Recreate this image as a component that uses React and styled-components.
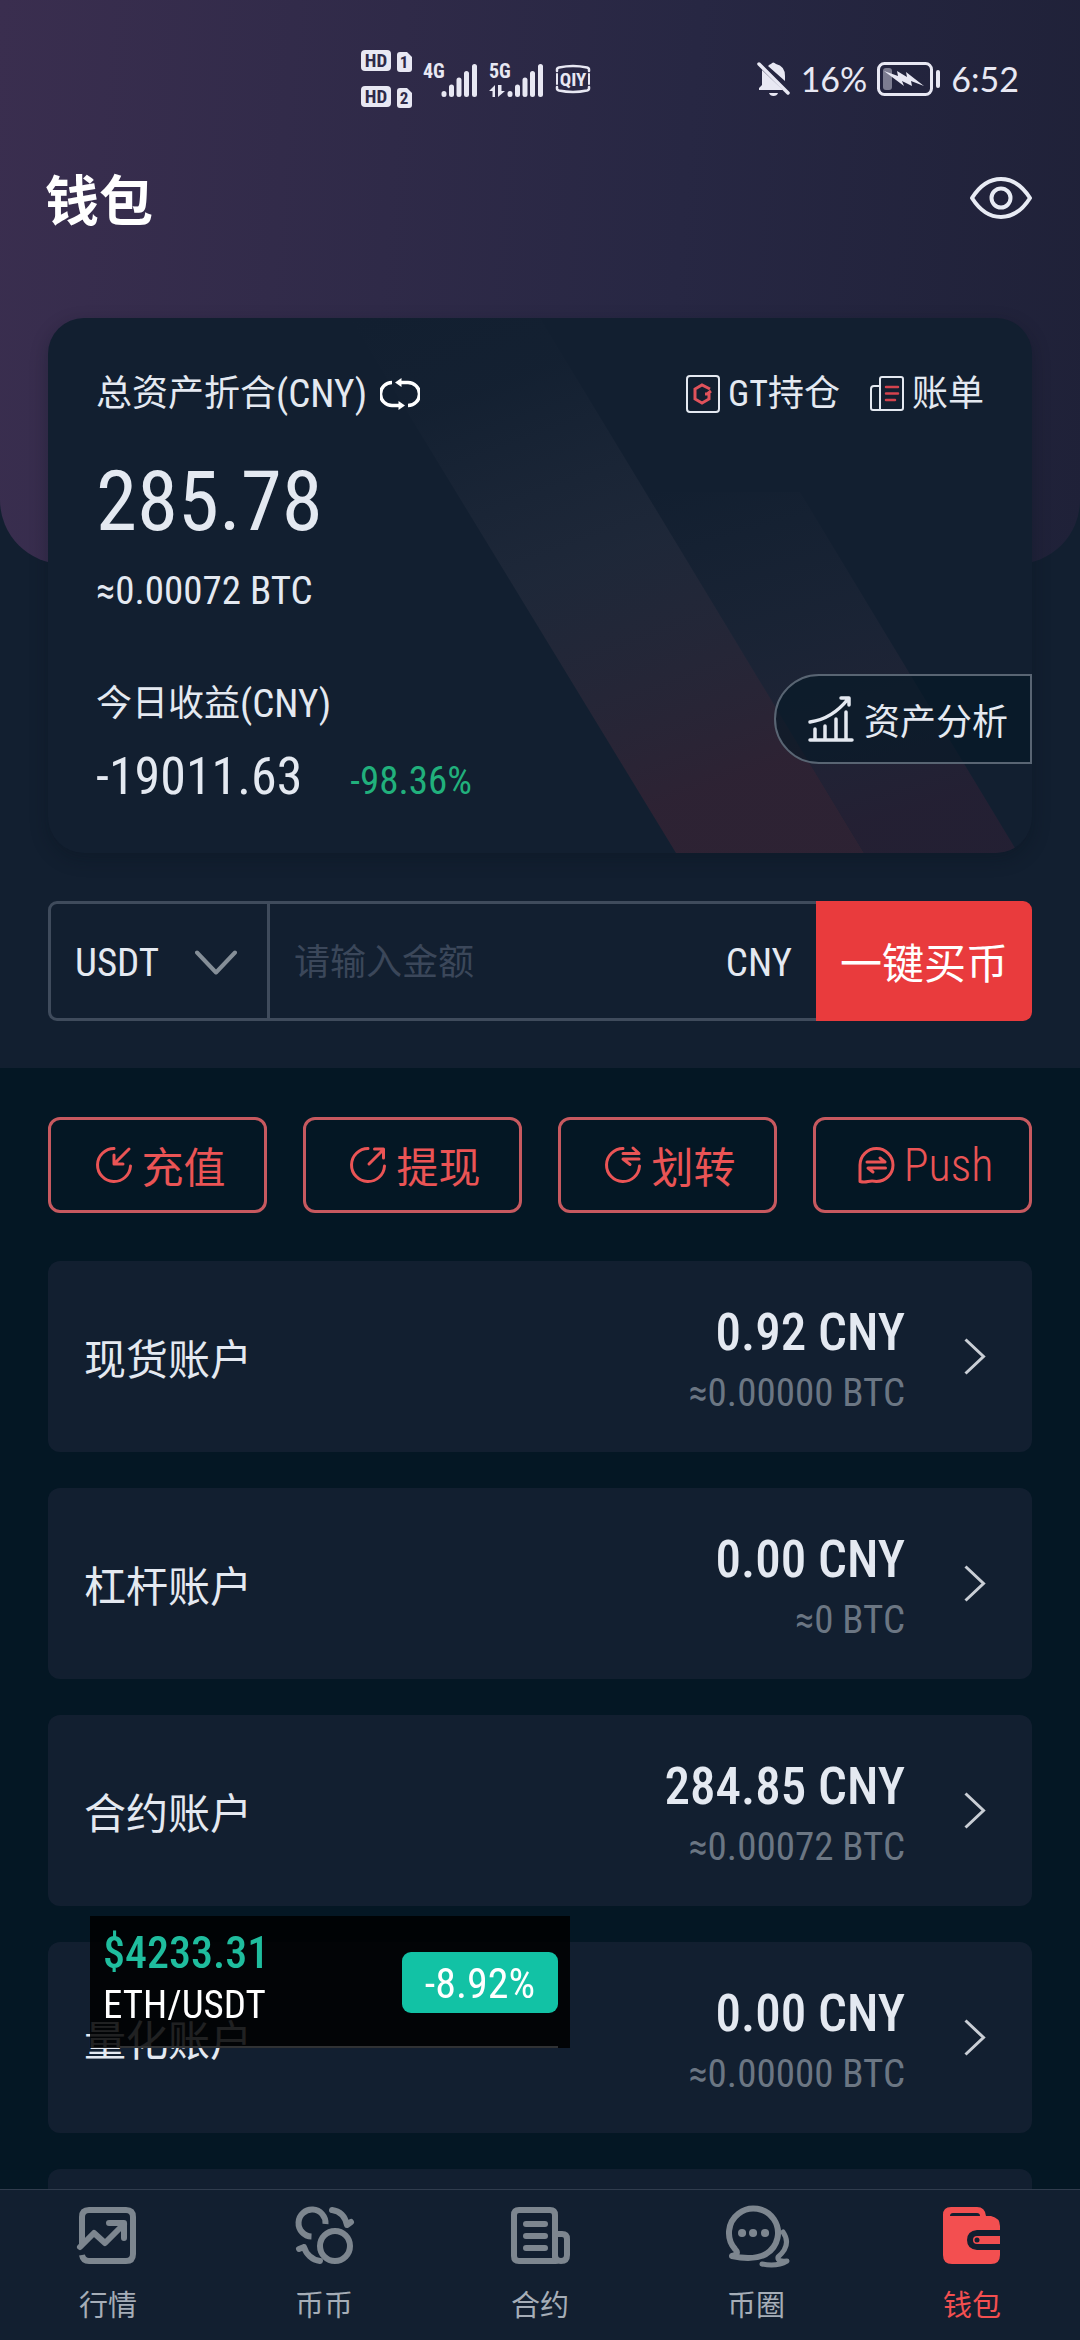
import React from "react";
import styled, { createGlobalStyle, css } from "styled-components";

const c = {
  page: "#041724",
  panel: "#121f30",
  text: "#e4e9f1",
  muted: "#6b7683",
  line: "#3f4b5c",
  red: "#e93b3d",
  coral: "#ea5455",
  coralLine: "#c7595f",
  green: "#21b07c",
  mint: "#12c2a5",
};

const latin = `"Roboto Condensed", Roboto, "Noto Sans CJK SC", sans-serif`;
const han = `"Noto Sans CJK SC", sans-serif`;

const Global = createGlobalStyle`
  *, *::before, *::after { box-sizing: border-box; }
  body {
    margin: 0;
    background: ${c.page};
    color: ${c.text};
    font-family: ${latin};
    font-size: 36px;
    line-height: 48px;
  }
  button, input, select { font: inherit; color: inherit; border: 0; margin: 0; padding: 0; background: none; }
  a { color: inherit; text-decoration: none; }
  svg { display: block; flex: none; }
  h1, h2, p, ul { margin: 0; padding: 0; font-weight: inherit; font-size: inherit; }
`;

const Page = styled.div`
  height: 100vh;
  display: flex;
  flex-direction: column;
`;

const Content = styled.main`
  flex: 1;
  min-height: 0;
  overflow-y: auto;
  scrollbar-width: none;
`;

const Hero = styled.section`
  position: relative;
  isolation: isolate;
  padding-bottom: 47px;
  background: ${c.panel};
  &::before {
    content: "";
    position: absolute;
    z-index: -1;
    inset: 0 0 auto;
    height: 564px;
    border-radius: 0 0 64px 64px;
    background: linear-gradient(95deg, #3a2e4f 0%, #272743 62%, #1f2138 100%);
  }
`;

const StatusBar = styled.header`
  height: 108px;
  padding: 50px 61px 0 361px;
  display: flex;
  align-items: center;
  justify-content: space-between;
  color: #e8e8f3;
`;

const StatusGroup = styled.div`
  display: flex;
  align-items: center;
  gap: ${(p) => p.$gap}px;
`;

const StatusText = styled.span`
  font-family: Lato, "Noto Sans", sans-serif;
  font-size: 34px;
`;

const TitleBar = styled.div`
  height: 180px;
  margin-bottom: 30px;
  padding: 0 48px 0 45px;
  display: flex;
  align-items: center;
  justify-content: space-between;
`;

const Title = styled.h1`
  color: #fff;
  font-family: ${han};
  font-size: 54px;
  line-height: 72px;
  font-weight: 700;
`;

const IconButton = styled.button`
  display: flex;
  align-items: center;
  cursor: pointer;
`;

const Card = styled.section`
  position: relative;
  isolation: isolate;
  margin: 0 48px;
  padding: 52px 48px 46px;
  border-radius: 36px;
  background: ${c.panel};
  box-shadow: 0 6px 18px rgba(5, 15, 28, 0.3);
`;

const Stripes = styled.svg`
  position: absolute;
  z-index: -1;
  inset: 0;
  width: 100%;
  height: 100%;
  border-radius: 36px;
`;

const CardHead = styled.div`
  display: flex;
  justify-content: space-between;
  align-items: center;
`;

const Label = styled.h2`
  display: flex;
  align-items: center;
`;

const Unit = styled.span`
  font-family: ${latin};
  font-size: 39px;
`;

const SwapButton = styled(IconButton)`
  margin-left: 13px;
`;

const CardLinks = styled.nav`
  display: flex;
  gap: 30px;
`;

const CardLink = styled.a`
  display: flex;
  align-items: center;
  gap: 8px;
`;

const Balance = styled.p`
  margin-top: 36px;
  font-size: 83px;
  line-height: 96px;
`;

const BalanceBtc = styled.p`
  margin-top: 17px;
  font-size: 39px;
`;

const CardFoot = styled.div`
  margin-top: 59px;
  margin-right: -48px;
  display: flex;
  align-items: flex-start;
  justify-content: space-between;
`;

const Profit = styled.div`
  padding-top: 6px;
`;

const ProfitRow = styled.p`
  height: 60px;
  margin-top: 19px;
  display: flex;
  align-items: baseline;
  gap: 48px;
  font-size: 52px;
  line-height: 60px;
`;

const Change = styled.span`
  color: ${c.green};
  font-size: 39px;
  line-height: 48px;
`;

const AnalysisButton = styled.button`
  height: 90px;
  padding: 0 22px 0 32px;
  display: flex;
  align-items: center;
  gap: 10px;
  border: 2px solid #596573;
  border-radius: 45px 0 0 45px;
  background: rgba(4, 23, 36, 0.6);
  font-family: ${han};
  cursor: pointer;
`;

const BuyForm = styled.form`
  margin: 48px 48px 0;
  height: 120px;
  display: grid;
  grid-template-columns: 222px 1fr 216px;
`;

const SelectBox = styled.label`
  position: relative;
  display: flex;
  border: 3px solid ${c.line};
  border-radius: 9px 0 0 9px;
  & > svg {
    position: absolute;
    right: 30px;
    top: 46px;
    pointer-events: none;
  }
`;

const CoinSelect = styled.select`
  flex: 1;
  appearance: none;
  padding: 4px 0 0 24px;
  border-radius: 9px;
  font-size: 39px;
`;

const AmountBox = styled.label`
  min-width: 0;
  padding: 4px 24px 0;
  display: flex;
  align-items: center;
  border: solid ${c.line};
  border-width: 3px 0;
`;

const AmountInput = styled.input`
  flex: 1;
  min-width: 0;
  &::placeholder { color: #3b475a; opacity: 1; }
`;

const BuyButton = styled.button`
  border-radius: 0 9px 9px 0;
  background: ${c.red};
  color: #fff;
  font-family: ${han};
  font-size: 42px;
  cursor: pointer;
`;

const Actions = styled.div`
  margin: 49px 48px 48px;
  display: grid;
  grid-template-columns: repeat(4, 1fr);
  gap: 36px;
`;

const ActionButton = styled.button`
  height: 96px;
  display: flex;
  align-items: center;
  justify-content: center;
  gap: 4px;
  border: 3px solid ${c.coralLine};
  border-radius: 12px;
  color: ${c.coral};
  font-family: ${(p) => (p.$latin ? latin : han)};
  font-size: ${(p) => (p.$latin ? 46 : 42)}px;
  font-weight: ${(p) => (p.$latin ? 300 : 400)};
  cursor: pointer;
`;

const Accounts = styled.ul`
  margin: 0 48px 36px;
  display: grid;
  gap: 36px;
  list-style: none;
`;

const Account = styled.a`
  height: 191px;
  padding: 0 46px 0 36px;
  display: flex;
  align-items: center;
  border-radius: 12px;
  background: ${c.panel};
`;

const AccountName = styled.span`
  flex: 1;
  font-family: ${han};
  font-size: 42px;
`;

const Amounts = styled.span`
  margin-right: 59px;
  padding-top: 6px;
  display: grid;
  justify-items: end;
`;

const Cny = styled.span`
  font-size: 51px;
  line-height: 66px;
  font-weight: 500;
`;

const Btc = styled.span`
  color: ${c.muted};
  font-size: 39px;
  line-height: 54px;
`;

const TabBar = styled.nav`
  height: 151px;
  flex: none;
  display: grid;
  grid-template-columns: repeat(5, 1fr);
  border-top: 1px solid #303c4d;
  background: ${c.panel};
`;

const Tab = styled.a`
  padding-top: 10px;
  display: flex;
  flex-direction: column;
  align-items: center;
  gap: 14px;
  color: #7d868f;
  font-size: 29px;
  line-height: 44px;
  span { color: #a5adb7; }
  ${(p) =>
    p.$active &&
    css`
      color: #f34f50;
      span { color: inherit; }
    `}
`;

const Ticker = styled.aside`
  position: fixed;
  left: 90px;
  bottom: 292px;
  width: 480px;
  height: 132px;
  padding: 0 12px 0 13px;
  display: flex;
  align-items: center;
  justify-content: space-between;
  background: rgba(0, 0, 0, 0.86);
  &::after {
    content: "";
    position: absolute;
    left: 30px;
    right: 12px;
    bottom: 0;
    height: 2px;
    background: #303234;
  }
`;

const TickerInfo = styled.div`
  padding-bottom: 10px;
`;

const TickerPrice = styled.p`
  color: #1fbd9e;
  font-size: 44px;
  line-height: 56px;
  font-weight: 500;
`;

const TickerPair = styled.p`
  color: #fff;
  font-size: 39px;
`;

const TickerBadge = styled.span`
  height: 61px;
  width: 156px;
  padding-top: 4px;
  display: flex;
  align-items: center;
  justify-content: center;
  border-radius: 9px;
  background: ${c.mint};
  color: #fff;
  font-size: 42px;
`;

const stroke = { fill: "none", stroke: "currentColor", strokeLinecap: "round", strokeLinejoin: "round" };

const HdIcon = () => (
  <svg width="52" height="60" viewBox="0 0 52 60" fill="currentColor">
    {[0, 36].map((y, i) => (
      <g key={y} transform={`translate(0 ${y})`}>
        <rect y="1" width="30" height="21" rx="4" />
        <path d="M39 3h7l5 5v12a3 3 0 0 1-3 3h-9a3 3 0 0 1-3-3V6a3 3 0 0 1 3-3z" />
        <text x="15" y="18" textAnchor="middle" fontSize="19" fontWeight="700" fill="#2e2a48">HD</text>
        <text x="43" y="19" textAnchor="middle" fontSize="17" fontWeight="700" fill="#2e2a48">{i + 1}</text>
      </g>
    ))}
  </svg>
);

const SignalIcon = ({ label, data }) => (
  <svg width="56" height="44" viewBox="0 -6 56 44" overflow="visible">
    <text x="0" y="15" fontSize="20" fontWeight="700" fill="currentColor">{label}</text>
    <g {...stroke} strokeWidth="5">
      <path d="M21 30.500v1M28.500 24v7.500M36 17v14.500M43.500 10.500v21M51.500 3.500v28" />
    </g>
    {data && <path d="M0 28l6-6v12H3.500v-6zM9 22v12l7-6h-3.500v-6z" fill="currentColor" />}
  </svg>
);

const QiyIcon = () => (
  <svg width="36" height="30" viewBox="0 0 36 30">
    <g {...stroke} strokeWidth="2.500">
      <path d="M2 7V5.500Q2 4 4 3.500Q18 .5 32 3.500Q34 4 34 5.500V7M2 23v1.500Q2 26 4 26.500Q18 29.500 32 26.500Q34 26 34 24.500V23" />
      <path d="M2 10v10M34 10v10" strokeWidth="2" />
    </g>
    <text x="18" y="22" textAnchor="middle" fontSize="19" fontWeight="700" fill="currentColor">QIY</text>
  </svg>
);

const MutedBell = () => (
  <svg width="34" height="36" viewBox="0 0 34 36" fill="currentColor">
    <path d="M5 9L26 29H2V27L5 24z" />
    <path d="M11 5Q13 3 14 3Q16 0 19 3Q28 5 28 15V20z" />
    <path d="M12 32h9q-1 3-4.500 3T12 32z" />
    <path d="M2 3L31 32" stroke="currentColor" strokeWidth="3.500" strokeLinecap="round" />
  </svg>
);

const Battery = () => (
  <svg width="64" height="34" viewBox="0 0 64 34">
    <rect x="1.500" y="1.500" width="53" height="31" rx="6" fill="none" stroke="currentColor" strokeWidth="3" />
    <rect x="6" y="6" width="9" height="22" rx="3" fill="currentColor" opacity=".45" />
    <path d="M7 9l14 5-1-5 10 6-1-5 18 14-13-5 1 5-10-5 2 5z" fill="currentColor" />
    <rect x="59" y="8" width="4" height="18" rx="2" fill="currentColor" />
  </svg>
);

const Eye = () => (
  <svg width="62" height="44" viewBox="0 0 62 44" stroke="#e8ebf4" fill="none" strokeWidth="4" strokeLinejoin="round">
    <path d="M2 22Q14 3 31 3T60 22Q48 41 31 41T2 22z" />
    <circle cx="31" cy="22" r="9.500" />
  </svg>
);

const Swap = () => (
  <svg width="40" height="32" viewBox="0 0 40 32" {...stroke} stroke="#fff" strokeWidth="3.500" strokeLinecap="butt">
    <path d="M12 4.500A11.500 11.500 0 0 0 12 27.500H19M28 27.500A11.500 11.500 0 0 0 28 4.500H21" />
    <path d="M15 4.500L21.500 0V9zM25 27.500L18.500 23V32z" fill="#fff" stroke="none" />
  </svg>
);

const GtIcon = () => (
  <svg width="34" height="38" viewBox="0 0 34 38" fill="none" strokeWidth="2">
    <rect x="1" y="1" width="32" height="36" rx="3" stroke={c.text} />
    <path d="M24 14L16 10L9 14V24L16 28L23 24V19H19M25 16L21 19" stroke="#e0525b" strokeWidth="3" />
  </svg>
);

const BillIcon = () => (
  <svg width="34" height="36" viewBox="0 0 34 36" {...stroke} strokeWidth="2">
    <path d="M10 34V3Q10 1 12 1H31Q33 1 33 3V32Q33 34 31 34H3Q1 34 1 32V13Q1 10 4 10H9" />
    <path d="M16 11H28M16 17.500H28M16 24H25" stroke="#d4434e" strokeWidth="2.500" />
  </svg>
);

const ChartIcon = () => (
  <svg width="46" height="48" viewBox="0 0 46 48" {...stroke} strokeWidth="3.500">
    <path d="M2 45H44M7 45V34M17 45V31M28 45V24M38 45V17" />
    <path d="M2 27Q24 24 40 4M33 3H41V10" />
  </svg>
);

const ChevronDown = () => (
  <svg width="42" height="26" viewBox="0 0 42 26" {...stroke} stroke="#858e97" strokeWidth="4">
    <path d="M2 2.500L21 22.500L40 2.500" />
  </svg>
);

const ChevronRight = () => (
  <svg width="22" height="37" viewBox="0 0 22 37" fill="none" stroke="#c9ced5" strokeWidth="3">
    <path d="M1.500 1.500L19.500 18.500L1.500 35.500" />
  </svg>
);

const actionShapes = {
  deposit: (
    <path d="M25 7.500A16.500 16.500 0 1 0 41.500 25M40 8L25.500 22.500M25 14V23H34" />
  ),
  withdraw: (
    <path d="M24 7.500A16.500 16.500 0 1 0 40.500 25M25 23L39 9M30.500 8H39.500V17" />
  ),
  transfer: (
    <>
      <path d="M24 7.500A16.500 16.500 0 1 0 40.500 25" />
      <path d="M24 12.500H40L34 7M40 18H24L31 23.500" />
    </>
  ),
  push: (
    <>
      <path d="M8 40.500V24A16.500 16.500 0 1 1 24.500 40.500Q20 39.500 16 40.500Q12 41.500 8 40.500z" />
      <path d="M15 21H33L28 17M33.500 27H16L21 31" />
    </>
  ),
};

const ActionIcon = ({ kind }) => (
  <svg width="48" height="48" viewBox="0 0 48 48" {...stroke} strokeWidth="3">
    {actionShapes[kind]}
  </svg>
);

const tabShapes = {
  market: (
    <>
      <path d="M7 44V17Q7 10 14 10H51Q58 10 58 17V54Q58 61 51 61H14Q8 61 7 55" strokeLinecap="butt" />
      <path d="M5 47L19 33L30 43L49 24M34 23H49V38" />
    </>
  ),
  spot: (
    <>
      <circle cx="44" cy="46" r="15" />
      <path d="M34.500 24A13.500 13.500 0 1 0 20.500 36.500" strokeLinecap="butt" />
      <path d="M41 10C49 11 54 16 56 25L60 22M29 61C21 60 15 54 13 47L8 49" />
    </>
  ),
  contract: (
    <>
      <path d="M49 61H12Q7 61 7 56V15Q7 10 12 10H43Q48 10 48 15V57" />
      <path d="M48 34H55Q60 34 60 39V55Q60 61 54 61T48 55V34" />
      <path d="M19 24H38M19 36H38M19 48H38" />
    </>
  ),
  circle: (
    <>
      <path d="M9 56Q17 54 12 49A24.500 24.500 0 1 1 43 54Q30 61 9 56z" />
      <path d="M60 32Q69 45 55 57Q54 62 64 61Q54 67 39 64" strokeWidth="5" />
      <path d="M19 33h.1M30 33h.1M42 33h.1" strokeWidth="8" />
    </>
  ),
  wallet: (
    <>
      <path
        d="M12 7H38Q46 7 47 16H52Q61 18 61 26V30H38Q28 31 28 40T38 50H61V55Q61 64 52 64H13Q4 64 4 55V15Q4 7 12 7zM14 13Q11 13 11 16H41Q41 13 38 13z"
        fill="currentColor"
        fillRule="evenodd"
        stroke="none"
      />
      <path d="M61 36V44H38A4 4 0 0 1 38 36z" fill="currentColor" stroke="none" />
      <circle cx="38" cy="40" r="2.500" fill={c.panel} stroke="none" />
    </>
  ),
};

const TabIcon = ({ kind }) => (
  <svg width="66" height="70" viewBox="0 0 66 70" overflow="visible" {...stroke} strokeWidth="6">
    {tabShapes[kind]}
  </svg>
);

const CardStripes = () => (
  <Stripes viewBox="0 0 984 535" preserveAspectRatio="none" aria-hidden="true">
    <defs>
      <linearGradient id="wide" x1="0" y1="0" x2="0.35" y2="1">
        <stop offset="0" stopColor="#2c3445" stopOpacity="0" />
        <stop offset=".2" stopColor="#2c3445" stopOpacity=".06" />
        <stop offset=".55" stopColor="#2a3041" stopOpacity=".5" />
        <stop offset="1" stopColor="#322334" stopOpacity=".85" />
      </linearGradient>
      <linearGradient id="narrow" x1="0" y1="0" x2="0.3" y2="1">
        <stop offset="0" stopColor="#2a3041" stopOpacity="0" />
        <stop offset=".5" stopColor="#2a2c3e" stopOpacity=".35" />
        <stop offset="1" stopColor="#282034" stopOpacity=".8" />
      </linearGradient>
    </defs>
    <path d="M302 0H492L816 535H628z" fill="url(#wide)" />
    <path d="M597 174H752L970 535H816z" fill="url(#narrow)" />
  </Stripes>
);

const actions = [
  ["deposit", "充值"],
  ["withdraw", "提现"],
  ["transfer", "划转"],
  ["push", "Push"],
];

const accounts = [
  ["现货账户", "0.92 CNY", "≈0.00000 BTC"],
  ["杠杆账户", "0.00 CNY", "≈0 BTC"],
  ["合约账户", "284.85 CNY", "≈0.00072 BTC"],
  ["量化账户", "0.00 CNY", "≈0.00000 BTC"],
  ["", "", ""],
];

const tabs = [
  ["market", "行情"],
  ["spot", "币币"],
  ["contract", "合约"],
  ["circle", "币圈"],
  ["wallet", "钱包"],
];

export default function App() {
  return (
    <Page>
      <Global />
      <Content>
        <Hero>
          <StatusBar>
            <StatusGroup $gap={10}>
              <HdIcon />
              <SignalIcon label="4G" />
              <SignalIcon label="5G" data />
              <QiyIcon />
            </StatusGroup>
            <StatusGroup $gap={10}>
              <MutedBell />
              <StatusText>16%</StatusText>
              <Battery />
              <StatusText>6:52</StatusText>
            </StatusGroup>
          </StatusBar>
          <TitleBar>
            <Title>钱包</Title>
            <IconButton aria-label="显示资产">
              <Eye />
            </IconButton>
          </TitleBar>
          <Card>
            <CardStripes />
            <CardHead>
              <Label>
                总资产折合<Unit>(CNY)</Unit>
                <SwapButton aria-label="切换币种">
                  <Swap />
                </SwapButton>
              </Label>
              <CardLinks>
                <CardLink href="#gt">
                  <GtIcon />
                  GT持仓
                </CardLink>
                <CardLink href="#bill">
                  <BillIcon />
                  账单
                </CardLink>
              </CardLinks>
            </CardHead>
            <Balance>285.78</Balance>
            <BalanceBtc>≈0.00072 BTC</BalanceBtc>
            <CardFoot>
              <Profit>
                <Label>
                  今日收益<Unit>(CNY)</Unit>
                </Label>
                <ProfitRow>
                  -19011.63 <Change>-98.36%</Change>
                </ProfitRow>
              </Profit>
              <AnalysisButton>
                <ChartIcon />
                资产分析
              </AnalysisButton>
            </CardFoot>
          </Card>
          <BuyForm onSubmit={(e) => e.preventDefault()}>
            <SelectBox>
              <CoinSelect aria-label="币种" defaultValue="USDT">
                <option>USDT</option>
              </CoinSelect>
              <ChevronDown />
            </SelectBox>
            <AmountBox>
              <AmountInput aria-label="金额" placeholder="请输入金额" inputMode="decimal" />
              <Unit>CNY</Unit>
            </AmountBox>
            <BuyButton type="submit">一键买币</BuyButton>
          </BuyForm>
        </Hero>
        <Actions>
          {actions.map(([kind, label]) => (
            <ActionButton key={kind} $latin={kind === "push"}>
              <ActionIcon kind={kind} />
              {label}
            </ActionButton>
          ))}
        </Actions>
        <Accounts>
          {accounts.map(([name, cny, btc], i) => (
            <li key={i}>
              <Account href="#account">
                <AccountName>{name}</AccountName>
                <Amounts>
                  <Cny>{cny}</Cny>
                  <Btc>{btc}</Btc>
                </Amounts>
                <ChevronRight />
              </Account>
            </li>
          ))}
        </Accounts>
      </Content>
      <TabBar>
        {tabs.map(([kind, label]) => (
          <Tab key={kind} href={`#${kind}`} $active={kind === "wallet"}>
            <TabIcon kind={kind} />
            <span>{label}</span>
          </Tab>
        ))}
      </TabBar>
      <Ticker>
        <TickerInfo>
          <TickerPrice>$4233.31</TickerPrice>
          <TickerPair>ETH/USDT</TickerPair>
        </TickerInfo>
        <TickerBadge>-8.92%</TickerBadge>
      </Ticker>
    </Page>
  );
}
